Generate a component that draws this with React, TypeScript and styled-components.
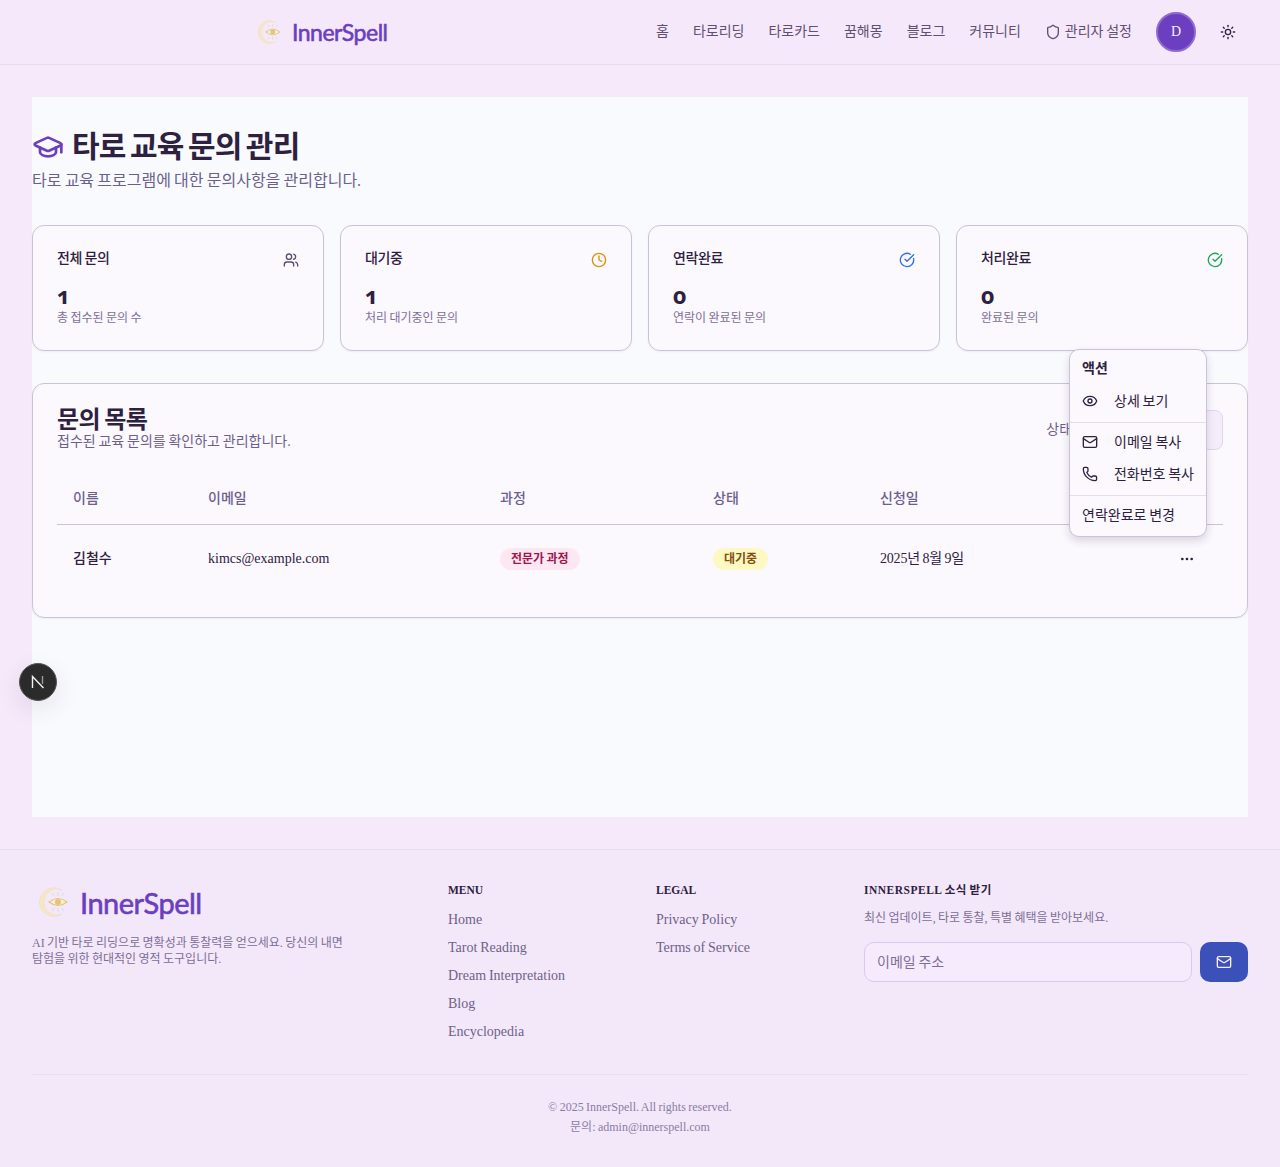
import React from "react";
import styled, { createGlobalStyle } from "styled-components";
import { GraduationCap, Users, Clock, CircleCheckBig, Eye, Mail, Phone, Shield, Sun, Ellipsis } from "lucide-react";

const SERIF = `"Liberation Serif", "Noto Sans CJK KR", serif`;

const Global = createGlobalStyle`
  html, body { margin: 0; padding: 0; background: #f6e9fa; }
  body { font-family: ${SERIF}; color: #2e2140; }
  * { box-sizing: border-box; word-spacing: -0.05em; }
`;

const Page = styled.div`
  width: 1280px;
  min-height: 1167px;
  display: flex;
  flex-direction: column;
  position: relative;
  overflow: hidden;
`;

const Header = styled.header`
  height: 65px;
  border-bottom: 1px solid #e7dcef;
  background: #f6e8fb;
  display: flex;
  align-items: center;
  justify-content: space-between;
  padding: 0 32px 0 252px;
`;

const LogoLink = styled.a<{ $big?: boolean }>`
  display: flex;
  align-items: center;
  gap: 8px;
  color: #6b3fc0;
  font-family: Lato, sans-serif;
  font-weight: 400;
  -webkit-text-stroke: 0.6px #6b3fc0;
  font-size: ${(p) => (p.$big ? "29px" : "23px")};
  letter-spacing: -0.5px;
  line-height: 1;
`;

const Nav = styled.nav`
  display: flex;
  align-items: center;
  gap: 24px;
`;

const NavItem = styled.a`
  display: flex;
  align-items: center;
  gap: 4px;
  font-size: 14px;
  color: #5f5070;
  line-height: 20px;
`;

const Avatar = styled.div`
  width: 40px;
  height: 40px;
  border-radius: 50%;
  background: #6b3fc0;
  border: 2px solid #8f6bd2;
  color: #f8effd;
  display: flex;
  align-items: center;
  justify-content: center;
  font-size: 14px;
  font-weight: 400;
`;

const ThemeBtn = styled.button`
  width: 40px;
  height: 40px;
  border: 0;
  background: transparent;
  display: flex;
  align-items: center;
  justify-content: center;
  color: #2e2140;
  padding: 0;
  margin-left: -12px;
`;

const Main = styled.main`
  padding: 32px 32px;
`;

const Panel = styled.div`
  height: 720px;
  background: #f9fafe;
  padding-top: 32px;
`;

const TitleRow = styled.h1`
  margin: 0;
  display: flex;
  align-items: center;
  gap: 8px;
  font-size: 30px;
  line-height: 36px;
  font-weight: 700;
  letter-spacing: -0.75px;
  word-spacing: -2.5px;
  color: #2e2140;
`;

const SubTitle = styled.p`
  margin: 4px 0 0;
  font-size: 16px;
  line-height: 24px;
  color: #6c5f8e;
`;

const StatGrid = styled.div`
  display: grid;
  grid-template-columns: repeat(4, 1fr);
  gap: 16px;
  margin-top: 32px;
`;

const Card = styled.section`
  background: #fbf8fe;
  border: 1px solid #cbc2d9;
  border-radius: 12px;
  box-shadow: 0 1px 2px rgba(46, 33, 64, 0.05);
`;

const StatCard = styled(Card)`
  height: 126px;
  padding: 24px;
`;

const StatHead = styled.div`
  display: flex;
  align-items: flex-start;
  justify-content: space-between;
  height: 20px;
`;

const StatLabel = styled.h3`
  margin: 0;
  font-size: 14px;
  line-height: 18px;
  font-weight: 500;
  letter-spacing: -0.35px;
  color: #2e2140;
`;

const StatIconWrap = styled.span<{ $c: string }>`
  color: ${(p) => p.$c};
  display: flex;
  margin-top: 2px;
`;

const StatValue = styled.div`
  margin-top: 13px;
  height: 26px;
  font-family: "Open Sans", "Noto Sans", sans-serif;
  font-variant-numeric: oldstyle-nums;
  font-feature-settings: "onum" 1;
  font-size: 23px;
  line-height: 24px;
  font-weight: 700;
  color: #2e2140;
`;

const StatNote = styled.p`
  margin: 1px 0 0;
  font-size: 12px;
  line-height: 16px;
  color: #7d7097;
`;

const ListCard = styled(Card)`
  margin-top: 32px;
  height: 235px;
  padding: 24px;
  position: relative;
`;

const ListHead = styled.div`
  display: flex;
  justify-content: space-between;
  align-items: flex-start;
`;

const ListTitle = styled.h2`
  margin: 0;
  font-size: 24px;
  line-height: 24px;
  font-weight: 700;
  letter-spacing: -0.6px;
  color: #2e2140;
`;

const ListSub = styled.p`
  margin: 0;
  font-size: 14px;
  line-height: 20px;
  color: #6c5f8e;
`;

const Filter = styled.div`
  display: flex;
  align-items: center;
  gap: 8px;
  margin-top: 2px;
`;

const FilterLabel = styled.span`
  font-size: 14px;
  color: #6c5f8e;
  margin-bottom: 4px;
`;

const Select = styled.div`
  width: 139px;
  height: 40px;
  background: #f5ecfb;
  border: 1px solid #e0d6ec;
  border-radius: 8px;
`;

const Table = styled.table`
  width: 100%;
  margin-top: 19px;
  border-collapse: collapse;
  table-layout: fixed;
`;

const Th = styled.th<{ $w?: number }>`
  width: ${(p) => (p.$w ? `${p.$w}px` : "auto")};
  height: 53px;
  padding: 0 16px 1px;
  text-align: left;
  font-size: 14px;
  font-weight: 500;
  color: #6c5f8e;
  border-bottom: 1px solid #cbc2d9;
`;

const Td = styled.td<{ $strong?: boolean }>`
  height: 66px;
  padding: 0 16px;
  font-size: 14px;
  font-weight: ${(p) => (p.$strong ? 500 : 400)};
  color: #2e2140;
`;

const EmailText = styled.div`
  padding-top: 3px;
`;

const DateText = styled.span`
  letter-spacing: -0.2px;
`;

const Badge = styled.span<{ $bg: string; $c: string }>`
  display: inline-block;
  padding: 0 11px;
  height: 22px;
  line-height: 22px;
  margin-top: 4px;
  border-radius: 11px;
  font-size: 12px;
  font-weight: 700;
  background: ${(p) => p.$bg};
  color: ${(p) => p.$c};
`;

const DotsCell = styled.div`
  display: flex;
  justify-content: flex-end;
  padding: 3px 12px 0 0;
  color: #2e2140;
`;

const Menu = styled.div`
  position: absolute;
  left: 1069px;
  top: 349px;
  width: 138px;
  height: 188px;
  background: #fbf8fe;
  border: 1px solid #cbc2d9;
  border-radius: 10px;
  box-shadow: 0 4px 8px rgba(46, 33, 64, 0.16);
  padding: 2px 0 4px;
  z-index: 5;
`;

const MenuLabel = styled.div`
  padding: 0 12px;
  height: 30px;
  margin-bottom: 2px;
  display: flex;
  align-items: center;
  font-size: 14px;
  font-weight: 700;
  color: #2e2140;
`;

const MenuItem = styled.div`
  height: 32px;
  padding: 0 12px;
  display: flex;
  align-items: center;
  gap: 16px;
  font-size: 14px;
  color: #2e2140;
  white-space: nowrap;

  svg {
    margin-top: 2px;
  }
`;

const MenuSep = styled.div`
  height: 1px;
  margin: 6px 0 2px;
  background: #e7dcef;
`;

const DevBadge = styled.div`
  position: absolute;
  left: 19px;
  top: 663px;
  width: 38px;
  height: 38px;
  border-radius: 50%;
  background: #2b2b2b;
  border: 1px solid #555;
  box-shadow: 0 8px 24px rgba(46, 33, 64, 0.1);
  display: flex;
  align-items: center;
  justify-content: center;
`;

const Footer = styled.footer`
  background: #f3e8fa;
  border-top: 1px solid #e7dcef;
  height: 318px;
  padding: 32px 32px 0;
`;

const FooterGrid = styled.div`
  display: grid;
  grid-template-columns: 384px 176px 176px 1fr;
  gap: 32px;
  height: 193px;
  border-bottom: 1px solid #e9def1;
`;

const BrandText = styled.p`
  margin: 13px 0 0;
  font-size: 12px;
  line-height: 16px;
  color: #7d6e97;
  max-width: 320px;
`;

const FootHead = styled.h4<{ $wide?: boolean }>`
  margin: 0;
  font-size: 11.5px;
  line-height: 16px;
  font-weight: 700;
  letter-spacing: ${(p) => (p.$wide ? "0.5px" : "0")};
  color: #2e2140;
`;

const FootLinks = styled.ul`
  list-style: none;
  margin: 12px 0 0;
  padding: 0;
  display: flex;
  flex-direction: column;
  gap: 8px;
`;

const FootLink = styled.li`
  font-size: 14px;
  line-height: 20px;
  color: #6f6188;
`;

const NewsText = styled.p`
  margin: 12px 0 0;
  font-size: 12px;
  line-height: 16px;
  color: #7d6e97;
`;

const NewsForm = styled.div`
  display: flex;
  gap: 8px;
  margin-top: 16px;
`;

const EmailInput = styled.div`
  flex: 1;
  height: 40px;
  border: 1px solid #d8c9f1;
  border-radius: 10px;
  background: #f5ebfc;
  display: flex;
  align-items: center;
  padding: 0 12px 2px;
  font-size: 14px;
  color: #7d6e97;
`;

const SendBtn = styled.button`
  width: 48px;
  height: 40px;
  border: 0;
  border-radius: 10px;
  background: #3b50b8;
  color: #f8effd;
  display: flex;
  align-items: center;
  justify-content: center;
  padding: 0;
`;

const Copy = styled.div`
  padding-top: 22px;
  text-align: center;
  font-size: 12px;
  line-height: 20px;
  color: #8a7ca3;
`;

function LogoMark({ size }: { size: number }) {
  return (
    <svg width={size} height={size} viewBox="0 0 40 40" fill="none">
      <path d="M30 8A14.500 14.500 0 1 0 30 32A13 13 0 1 1 30 8Z" fill="#f7e6c6" stroke="#efddb9" strokeWidth="0.5" />
      <path d="M17 20Q26 13 35 20Q26 27 17 20Z" fill="#f7eeda" stroke="#e5c47c" strokeWidth="1.2" />
      <circle cx="26" cy="20" r="3" fill="#e6c27a" />
      <path d="M26 10v4M20.500 11l1.500 3M31.500 11l-1.500 3M26 26v4M20.500 29l1.500-3M31.500 29l-1.500-3" stroke="#ddd2cc" strokeWidth="0.8" />
    </svg>
  );
}

function NextMark() {
  return (
    <svg width="16" height="16" viewBox="0 0 16 16" fill="none">
      <path d="M2.500 14V2.500L13.500 14" stroke="#f2f2f2" strokeWidth="1.4" />
      <path d="M12.500 2v8" stroke="#999" strokeWidth="1.4" />
    </svg>
  );
}

const navItems = ["홈", "타로리딩", "타로카드", "꿈해몽", "블로그", "커뮤니티"];

const stats = [
  { label: "전체 문의", value: "1", note: "총 접수된 문의 수", icon: Users, color: "#5a4d72" },
  { label: "대기중", value: "1", note: "처리 대기중인 문의", icon: Clock, color: "#d9920a" },
  { label: "연락완료", value: "0", note: "연락이 완료된 문의", icon: CircleCheckBig, color: "#2f6fe0" },
  { label: "처리완료", value: "0", note: "완료된 문의", icon: CircleCheckBig, color: "#1fa45a" },
];

export default function App() {
  return (
    <Page>
      <Global />
      <Header>
        <LogoLink>
          <LogoMark size={32} />
          InnerSpell
        </LogoLink>
        <Nav>
          {navItems.map((n) => (
            <NavItem key={n}>{n}</NavItem>
          ))}
          <NavItem>
            <Shield size={16} />
            관리자 설정
          </NavItem>
          <Avatar>D</Avatar>
          <ThemeBtn aria-label="theme">
            <Sun size={16} />
          </ThemeBtn>
        </Nav>
      </Header>
      <Main>
        <Panel>
          <TitleRow>
            <GraduationCap size={32} color="#6b3fc0" strokeWidth={2} />
            타로 교육 문의 관리
          </TitleRow>
          <SubTitle>타로 교육 프로그램에 대한 문의사항을 관리합니다.</SubTitle>
          <StatGrid>
            {stats.map((s) => (
              <StatCard key={s.label}>
                <StatHead>
                  <StatLabel>{s.label}</StatLabel>
                  <StatIconWrap $c={s.color}>
                    <s.icon size={16} />
                  </StatIconWrap>
                </StatHead>
                <StatValue>{s.value}</StatValue>
                <StatNote>{s.note}</StatNote>
              </StatCard>
            ))}
          </StatGrid>
          <ListCard>
            <ListHead>
              <div>
                <ListTitle>문의 목록</ListTitle>
                <ListSub>접수된 교육 문의를 확인하고 관리합니다.</ListSub>
              </div>
              <Filter>
                <FilterLabel>상태:</FilterLabel>
                <Select />
              </Filter>
            </ListHead>
            <Table>
              <thead>
                <tr>
                  <Th $w={135}>이름</Th>
                  <Th $w={292}>이메일</Th>
                  <Th $w={213}>과정</Th>
                  <Th $w={167}>상태</Th>
                  <Th $w={210}>신청일</Th>
                  <Th>액션</Th>
                </tr>
              </thead>
              <tbody>
                <tr>
                  <Td $strong>김철수</Td>
                  <Td>
                    <EmailText>kimcs@example.com</EmailText>
                  </Td>
                  <Td>
                    <Badge $bg="#fce7f3" $c="#9d174d">전문가 과정</Badge>
                  </Td>
                  <Td>
                    <Badge $bg="#fef9c3" $c="#854d0e">대기중</Badge>
                  </Td>
                  <Td>
                    <DateText>2025년 8월 9일</DateText>
                  </Td>
                  <Td>
                    <DotsCell>
                      <Ellipsis size={16} />
                    </DotsCell>
                  </Td>
                </tr>
              </tbody>
            </Table>
          </ListCard>
        </Panel>
      </Main>
      <Footer>
        <FooterGrid>
          <div>
            <LogoLink $big>
              <LogoMark size={40} />
              InnerSpell
            </LogoLink>
            <BrandText>AI 기반 타로 리딩으로 명확성과 통찰력을 얻으세요. 당신의 내면 탐험을 위한 현대적인 영적 도구입니다.</BrandText>
          </div>
          <div>
            <FootHead>MENU</FootHead>
            <FootLinks>
              {["Home", "Tarot Reading", "Dream Interpretation", "Blog", "Encyclopedia"].map((l) => (
                <FootLink key={l}>{l}</FootLink>
              ))}
            </FootLinks>
          </div>
          <div>
            <FootHead>LEGAL</FootHead>
            <FootLinks>
              <FootLink>Privacy Policy</FootLink>
              <FootLink>Terms of Service</FootLink>
            </FootLinks>
          </div>
          <div>
            <FootHead $wide>INNERSPELL 소식 받기</FootHead>
            <NewsText>최신 업데이트, 타로 통찰, 특별 혜택을 받아보세요.</NewsText>
            <NewsForm>
              <EmailInput>이메일 주소</EmailInput>
              <SendBtn aria-label="subscribe">
                <Mail size={16} />
              </SendBtn>
            </NewsForm>
          </div>
        </FooterGrid>
        <Copy>
          © 2025 InnerSpell. All rights reserved.
          <br />
          문의: admin@innerspell.com
        </Copy>
      </Footer>
      <Menu>
        <MenuLabel>액션</MenuLabel>
        <MenuItem>
          <Eye size={16} />
          상세 보기
        </MenuItem>
        <MenuSep />
        <MenuItem>
          <Mail size={16} />
          이메일 복사
        </MenuItem>
        <MenuItem>
          <Phone size={16} />
          전화번호 복사
        </MenuItem>
        <MenuSep />
        <MenuItem>연락완료로 변경</MenuItem>
      </Menu>
      <DevBadge>
        <NextMark />
      </DevBadge>
    </Page>
  );
}
